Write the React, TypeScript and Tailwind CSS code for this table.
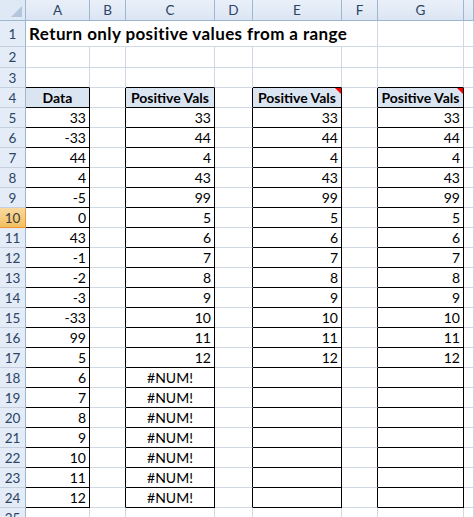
import React from "react";

const COLS = ["A", "B", "C", "D", "E", "F", "G", "H"];
const A_VALS = ["33", "-33", "44", "4", "-5", "0", "43", "-1", "-2", "-3", "-33", "99", "5", "6", "7", "8", "9", "10", "11", "12"];
const P_VALS = ["33", "44", "4", "43", "99", "5", "6", "7", "8", "9", "10", "11", "12"];

const GRID = "grid grid-cols-[26px_64px_36px_89px_38px_89px_36px_86px_1fr] grid-rows-[100%] overflow-hidden";

function isBordered(r: number, c: number) {
  if (c === 0 || c === 2 || c === 4 || c === 6) return r >= 4 && r <= 24;
  return false;
}

function cellContent(r: number, c: number): { text: string; kind: "num" | "head" | "err" | "none" } {
  if (r === 4 && c === 0) return { text: "Data", kind: "head" };
  if (r === 4 && (c === 2 || c === 4 || c === 6)) return { text: "Positive Vals", kind: "head" };
  if (r >= 5 && r <= 24 && c === 0) return { text: A_VALS[r - 5], kind: "num" };
  if (r >= 5 && r <= 17 && (c === 2 || c === 4 || c === 6)) return { text: P_VALS[r - 5], kind: "num" };
  if (r >= 18 && r <= 24 && c === 2) return { text: "#NUM!", kind: "err" };
  return { text: "", kind: "none" };
}

function RedTri() {
  return (
    <svg className="absolute right-0 top-0" width="6" height="6" viewBox="0 0 6 6">
      <polygon points="0,0 6,0 6,6" fill="#ff0000" />
    </svg>
  );
}

function RowHeader({ n }: { n: number }) {
  const sel = n === 10;
  return (
    <div
      className={
        sel
          ? "flex min-h-0 items-center justify-center overflow-hidden border-r border-b border-r-[#f29436] border-b-[#f29436] bg-gradient-to-b from-[#f9d99f] to-[#f1c15f] text-[13.5px] leading-[16px] text-[#3b3b3b]"
          : "flex min-h-0 items-center justify-center overflow-hidden border-r border-b border-r-[#9eb6ce] border-b-[#c5d1e0] bg-[#e4ecf7] text-[13.5px] leading-[16px] text-[#2c4466]"
      }
    >
      {n}
    </div>
  );
}

function Cell({ r, c }: { r: number; c: number }) {
  const b = isBordered(r, c);
  const rb = b || isBordered(r, c + 1);
  const bb = b || isBordered(r + 1, c);
  const { text, kind } = cellContent(r, c);
  const fill = r === 4 && b;
  const tri = r === 4 && (c === 4 || c === 6);
  const cls = [
    "relative flex min-h-0 items-end overflow-hidden whitespace-nowrap border-r border-b pb-[1px] text-[14px] leading-[17px] text-black",
    rb ? "border-r-black" : "border-r-[#d0d7e5]",
    bb ? "border-b-black" : "border-b-[#d0d7e5]",
    fill ? "bg-[#dbe5f1]" : "bg-white",
    kind === "num" ? "justify-end pr-[3px]" : "justify-center",
    kind === "head" ? "font-bold" : "",
  ].join(" ");
  return (
    <div className={cls}>
      {text}
      {tri && <RedTri />}
    </div>
  );
}

function rowHeightClass(r: number) {
  if (r === 1) return "h-[26px]";
  if (r === 2) return "h-[21px]";
  return "h-[20px]";
}

export default function App() {
  const rows = Array.from({ length: 24 }, (_, i) => i + 2);
  return (
    <div className="h-[517px] w-[474px] overflow-hidden bg-white font-['Lato',sans-serif]">
      {/* Column headers */}
      <div className={`${GRID} h-[21px]`}>
        <div className="relative border-r border-b border-r-[#9eb6ce] border-b-[#9eb6ce] bg-[#dfe8f5]">
          <svg className="absolute bottom-[3px] right-[3px]" width="11" height="11" viewBox="0 0 11 11">
            <polygon points="11,0 11,11 0,11" fill="#b4c6dd" />
          </svg>
        </div>
        {COLS.map((c) => (
          <div
            key={c}
            className="flex min-h-0 items-center justify-center overflow-hidden whitespace-nowrap border-r border-b border-r-[#9eb6ce] border-b-[#9eb6ce] bg-gradient-to-b from-[#eaf0f9] to-[#dbe5f3] text-[13.5px] leading-[16px] text-[#2c4466]"
          >
            {c === "H" ? "" : c}
          </div>
        ))}
      </div>
      {/* Row 1 with title */}
      <div className={`${GRID} h-[26px]`}>
        <RowHeader n={1} />
        <div className="col-span-6 flex min-h-0 items-end overflow-visible whitespace-nowrap border-r border-b border-r-[#d0d7e5] border-b-[#d0d7e5] pb-[2px] pl-[3px] text-[17px] font-bold leading-[20px] tracking-[0.4px] text-black">
          Return only positive values from a range
        </div>
        <div className="border-r border-b border-r-[#d0d7e5] border-b-[#d0d7e5]" />
        <div className="border-r border-b border-r-[#d0d7e5] border-b-[#d0d7e5]" />
      </div>
      {rows.map((r) => (
        <div key={r} className={`${GRID} ${rowHeightClass(r)}`}>
          <RowHeader n={r} />
          {COLS.map((_, c) => (
            <Cell key={c} r={r} c={c} />
          ))}
        </div>
      ))}
    </div>
  );
}
